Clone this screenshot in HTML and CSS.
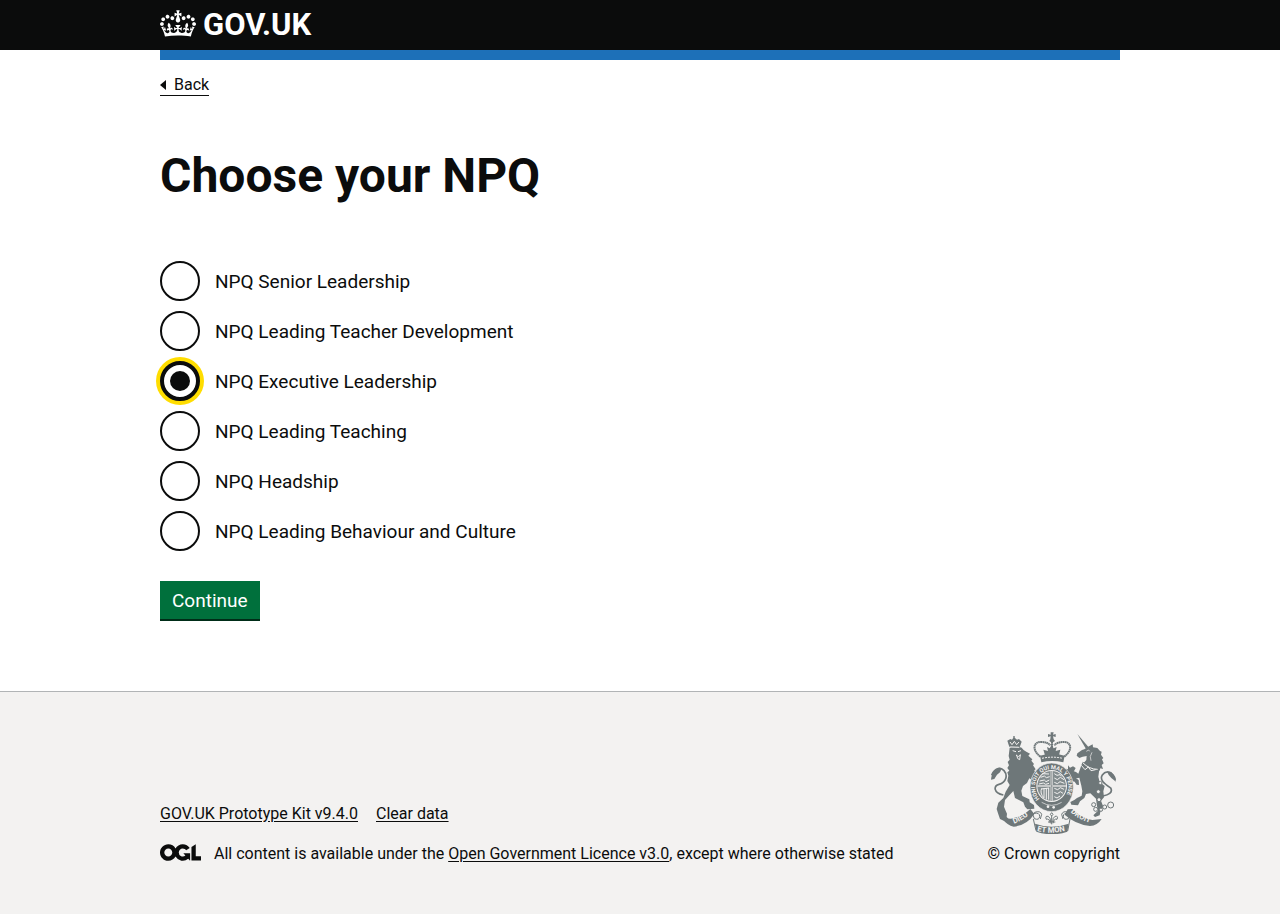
FILE: index.html
```html
<!DOCTYPE html>
<html lang="en">
<head>
<meta charset="utf-8">
<meta name="viewport" content="width=device-width, initial-scale=1">
<title>Choose your NPQ - GOV.UK</title>
<link rel="stylesheet" href="styles.css">
</head>
<body>
<header class="header">
  <div class="container header-inner">
    <a class="logo" href="#">
      <svg class="crown" viewBox="0 0 132 97" width="36" height="27" aria-hidden="true"><path fill="currentColor" fill-rule="evenodd" d="M25 30.2c3.5 1.5 7.7-.2 9.1-3.7 1.5-3.6-.2-7.8-3.9-9.2-3.6-1.4-7.6.3-9.1 3.9-1.4 3.5.3 7.5 3.9 9zM9 39.5c3.6 1.5 7.8-.2 9.2-3.7 1.5-3.6-.2-7.8-3.9-9.1-3.6-1.5-7.6.2-9.1 3.8-1.4 3.5.3 7.5 3.8 9zM4.4 57.2c3.5 1.5 7.7-.2 9.1-3.8 1.5-3.6-.2-7.7-3.9-9.1-3.5-1.5-7.6.3-9.1 3.8-1.4 3.5.3 7.6 3.9 9.1zm38.3-21.4c3.5 1.5 7.7-.2 9.1-3.8 1.5-3.6-.2-7.7-3.9-9.1-3.6-1.5-7.6.3-9.1 3.8-1.3 3.6.4 7.7 3.9 9.1zm64.4-5.6c-3.6 1.5-7.8-.2-9.1-3.7-1.5-3.6.2-7.8 3.8-9.2 3.6-1.4 7.7.3 9.2 3.9 1.3 3.5-.4 7.5-3.9 9zm15.9 9.3c-3.6 1.5-7.7-.2-9.1-3.7-1.5-3.6.2-7.8 3.7-9.1 3.6-1.5 7.7.2 9.2 3.8 1.5 3.5-.3 7.5-3.8 9zm4.7 17.7c-3.6 1.5-7.8-.2-9.2-3.8-1.5-3.6.2-7.7 3.9-9.1 3.6-1.5 7.7.3 9.2 3.8 1.3 3.5-.4 7.6-3.9 9.1zM89.3 35.8c-3.6 1.5-7.8-.2-9.2-3.8-1.4-3.6.2-7.7 3.9-9.1 3.6-1.5 7.7.3 9.2 3.8 1.4 3.6-.3 7.7-3.9 9.1zM69.7 17.7l8.9 4.7V9.3l-8.9 2.8c-.2-.3-.5-.6-.9-.9L72.4 0H59.6l3.5 11.2c-.3.3-.6.5-.9.9l-8.8-2.8v13.1l8.8-4.7c.3.3.6.7.9.9l-5 15.4v.1c-.2.8-.4 1.6-.4 2.4 0 4.1 3.1 7.5 7 8.1h.2c.3 0 .7.1 1 .1.4 0 .7 0 1-.1h.2c4-.6 7.1-4.1 7.1-8.1 0-.8-.1-1.7-.4-2.4V34l-5.1-15.4c.4-.2.7-.6 1-.9zM66 92.8c16.9 0 32.8 1.1 47.1 3.2 4-16.9 8.9-26.7 14-33.5l-9.6-3.4c1 4.9 1.1 7.2 0 10.2-1.5-1.4-3-4.3-4.2-8.7L108.6 76c2.8-2 5-3.2 7.5-3.3-4.4 9.4-10 11.9-13.6 11.2-4.3-.8-6.3-4.6-5.6-7.9 1-4.7 5.7-5.9 8-.5 4.3-8.7-3-11.4-7.6-8.8 7.1-7.2 7.9-13.5 2.1-21.1-8 6.1-8.1 12.3-4.5 20.8-4.7-5.4-12.1-2.5-9.5 6.2 3.4-5.2 7.9-2 7.2 3.1-.6 4.3-6.4 7.8-13.5 7.2-10.3-.9-10.9-8-11.2-13.8 2.5-.5 7.1 1.8 11 7.3L80.2 60c-4.1 4.4-8 5.3-12.3 5.4 1.4-4.4 8-11.6 8-11.6H55.5s6.4 7.2 7.9 11.6c-4.2-.1-8-1-12.3-5.4l1.4 16.4c3.9-5.5 8.5-7.7 10.9-7.3-.3 5.8-.9 12.8-11.1 13.8-7.2.6-12.9-2.9-13.5-7.2-.7-5 3.8-8.3 7.1-3.1 2.7-8.7-4.6-11.6-9.4-6.2 3.7-8.5 3.6-14.7-4.6-20.8-5.8 7.6-5 13.9 2.2 21.1-4.7-2.6-11.9.1-7.7 8.8 2.3-5.5 7.1-4.2 8.1.5.7 3.3-1.3 7.1-5.7 7.9-3.5.7-9-1.8-13.5-11.2 2.5.1 4.7 1.3 7.5 3.3l-4.7-15.4c-1.2 4.4-2.7 7.2-4.3 8.7-1.1-3-.9-5.3 0-10.2l-9.5 3.4c5 6.9 9.9 16.7 14 33.5 14.8-2.1 30.8-3.2 47.7-3.2z"/></svg>
      <span>GOV.UK</span>
    </a>
  </div>
</header>

<div class="page">
  <div class="container">
    <a class="back-link" href="#"><svg class="back-arrow" viewBox="0 0 6 10" width="6" height="10" aria-hidden="true"><path fill="currentColor" d="M0 5 6 0v10z"/></svg>Back</a>
    <main class="main">
      <h1 class="heading" id="heading">Choose your NPQ</h1>
      <form class="form">
        <div class="radios" role="radiogroup" aria-labelledby="heading">
          <div class="radio"><input class="radio-input" type="radio" name="npq" id="npq-1"><label class="radio-label" for="npq-1">NPQ Senior Leadership</label></div>
          <div class="radio"><input class="radio-input" type="radio" name="npq" id="npq-2"><label class="radio-label" for="npq-2">NPQ Leading Teacher Development</label></div>
          <div class="radio"><input class="radio-input" type="radio" name="npq" id="npq-3" checked><label class="radio-label" for="npq-3">NPQ Executive Leadership</label></div>
          <div class="radio"><input class="radio-input" type="radio" name="npq" id="npq-4"><label class="radio-label" for="npq-4">NPQ Leading Teaching</label></div>
          <div class="radio"><input class="radio-input" type="radio" name="npq" id="npq-5"><label class="radio-label" for="npq-5">NPQ Headship</label></div>
          <div class="radio"><input class="radio-input" type="radio" name="npq" id="npq-6"><label class="radio-label" for="npq-6">NPQ Leading Behaviour and Culture</label></div>
        </div>
        <button class="button" type="button">Continue</button>
      </form>
    </main>
  </div>
</div>

<footer class="footer">
  <div class="container footer-inner">
    <div class="footer-meta">
      <ul class="footer-links">
        <li><a class="footer-link" href="#">GOV.UK Prototype Kit v9.4.0</a></li>
        <li><a class="footer-link" href="#">Clear data</a></li>
      </ul>
      <div class="licence">
        <svg class="ogl" viewBox="0 0 483.2 195.7" width="41" height="17" aria-hidden="true"><path fill="currentColor" d="M421.5 142.8V.1l-50.7 32.3v161.1h112.4v-50.7zm-122.3-9.6A47.12 47.12 0 0 1 221 97.8c0-26 21.1-47.1 47.1-47.1 16.7 0 31.4 8.7 39.7 21.8l42.7-27.2A97.63 97.63 0 0 0 268.1 0c-36.5 0-68.3 20.1-85.1 49.7A98 98 0 0 0 97.8 0C43.9 0 0 43.9 0 97.8s43.9 97.8 97.8 97.8c36.5 0 68.3-20.1 85.1-49.7a97.76 97.76 0 0 0 149.6 25.4l19.4 22.2h3v-87.8h-80l24.3 27.5zM97.8 145c-26 0-47.1-21.1-47.1-47.1s21.1-47.1 47.1-47.1 47.1 21.1 47.1 47.1S123.8 145 97.8 145"/></svg>
        <span>All content is available under the <a class="footer-link" href="#">Open Government Licence v3.0</a>, except where otherwise stated</span>
      </div>
    </div>
    <a class="copyright" href="#">
      <svg class="crest" viewBox="36 30 375 306" width="125" height="102" aria-hidden="true">
        <defs>
          <path id="motto" d="M182 231A50 53 0 1 1 254 231"/>
          <path id="dieu" d="M105 305Q132 296 160 270"/>
          <path id="mon" d="M174 327Q218 338 266 325"/>
          <path id="droit" d="M275 270Q302 297 346 305"/>
        </defs>
        <!-- royal crown -->
        <g fill="#6e7779">
          <path d="M215 31h9l-2 7 8-2v9l-8-2 2 9 4 5-9 5-8-5 3-5 1-9-8 2v-9l8 2z"/>
          <path d="M183 101q37-11 74 0l-4 20q-34-8-66 0z"/>
          <path d="M218 69l6 10 9-4-3 12 14-4-4 17q-22-5-42 0l-5-17 14 4-3-12 8 4z"/>
        </g>
        <path d="M184 104C156 82 165 58 187 60q19 0 27 10M256 104c28-22 19-46-3-44q-19 0-27 10M219 60v24" fill="none" stroke="#6e7779" stroke-width="6" stroke-dasharray="5 1"/>
        <path d="M189 109q31-7 62 0" fill="none" stroke="#f3f2f1" stroke-width="3" stroke-dasharray="6 3"/>
        <!-- lion -->
        <g fill="#6e7779">
          <path d="M91 75l-6-19 9-5 5 2 4-6-1-4h6l-1 4 7 6 6-2 8 8-6 17q-15-5-31-1z"/>
          <path d="M92 77q16-8 36 0 6 9 14 12l11 6-5 6 12 11-3 4 8 10-3 4 8 12-4 3 5 14 6 6 3 16-7 3 1 15-10-5-4-9 4-7-13-9-7 14-12 9-5 14 3 16 21 10 1 9 13 8 1 11-21 2-7-8-5-13-25-13-5-21-12 13-13 14-3 20 5 12 4 9-1 10 6 6-3 10-9-3-14-7-5-14-5-16 5-19 15-14 7-19 12-20-7-12 3-16-3-10 6-5-6-8 5-8-4-10 6-7-3-11z"/>
        </g>
        <path d="M101 86l10 3M117 89l9-3M112 99q7 9 12-1l-2 15q-8-2-8-10z" fill="none" stroke="#f3f2f1" stroke-width="3"/>
        <path d="M93 60l6 8 7-10 7 10 7-8M92 75l29 1" fill="none" stroke="#f3f2f1" stroke-width="3"/>
        <path d="M73 219C43 213 43 192 60 187c22-6 27-27 15-41-11-13-29-7-37 14" fill="none" stroke="#6e7779" stroke-width="5"/>
        <path d="M37 166q3-21 22-29l10 1-6 13-9 7-8 13-10 2z" fill="#6e7779"/>
        <!-- unicorn -->
        <g fill="#6e7779">
          <path d="M295 36l34 40-8 5z"/>
          <path d="M316 82l14-9 11-6 1 9 13 2 8 9 5 2-2 9 7 10-4 4 5 12-6 5 4 12-8-2-2 7-50-21 10-11 1-12-12 2-10 4-8-7 2-7 14-10z"/>
          <path d="M311 119l50 23-3 22 4 16 15 12-4 16 2 18-9 10 7 18-8 11-3 15-14 5-5-5 14-14-3-13-3-23-17-16-13 2-5 12-13 10-6 12-20-2-3-8 12-6 8-6 14-7 2-13-3-17-6-24-17 4-16-7-13-16 6-8 15 5 15 5 7 5z"/>
          <path d="M276 151l10 3 5 15 8 5 1 15-7-1-6-9-9-2 1-8 6-2-6-9-6-1z"/>
          <path d="M267 130l6 7 9-4 8 5-6 11-17 2z"/>
        </g>
        <path d="M311 122q20 20 45 20M307 130l11 13 10-8 8 11 14-3" fill="none" stroke="#f3f2f1" stroke-width="3"/>
        <path d="M322 88l7-4 3 4M339 91q-9 13-3 25" fill="none" stroke="#f3f2f1" stroke-width="2"/>
        <path d="M372 222c15-3 31-10 23-24-17-12-35-24-25-39 12-17 34-8 39 15" fill="none" stroke="#6e7779" stroke-width="5"/>
        <path d="M383 147l14 3 10 14 4 15-14-11-8-9z" fill="#6e7779"/>
        <g fill="#f3f2f1" stroke="#6e7779" stroke-width="3"><circle cx="395" cy="249" r="9"/><circle cx="377" cy="255" r="6"/><circle cx="366" cy="263" r="5"/><circle cx="344" cy="248" r="6"/><circle cx="350" cy="262" r="6"/><circle cx="358" cy="209" r="6"/><circle cx="360" cy="233" r="6"/><circle cx="364" cy="183" r="5"/></g>
        <!-- garter and shield -->
        <ellipse cx="218" cy="196" rx="65" ry="73" fill="#6e7779" stroke="#f3f2f1" stroke-width="2"/>
        <ellipse cx="218" cy="192" rx="46" ry="48" fill="#f3f2f1"/>
        <ellipse cx="218" cy="192" rx="43" ry="45" fill="#848d8f"/>
        <path d="M218 147v90M175 192h86" stroke="#f3f2f1" stroke-width="6"/>
        <g fill="none" stroke="#f3f2f1" stroke-width="3">
          <path d="M185 166l11-4 6 5 10-3M182 177l14-3 5 5 10-5M190 155l20 1M180 186l13-3 7 4 10-3"/>
          <path d="M226 155l8 5 9-2 5 5M226 168l9 5 9-7 11 7M226 181l9 4 8-6 13 5"/>
          <path d="M226 199l10 4 8-6 11 5M226 211l9 4 9-6 8 5M226 224l8 4 9-6"/>
          <path d="M188 199q-6 14 6 28M195 198v31M202 198v35M209 198v35M187 201l23-3"/>
        </g>
        <path d="M218 147v90M175 192h86" stroke="#6e7779" stroke-width="2"/>
        <text class="crest-motto"><textPath href="#motto">HONI SOIT QUI MAL Y PENSE</textPath></text>
        <g fill="#f3f2f1"><circle cx="207" cy="254" r="4"/><circle cx="224" cy="256" r="4"/></g>
        <path d="M188 241q30 18 60 0" fill="none" stroke="#f3f2f1" stroke-width="2"/>
        <!-- ribbon -->
        <g fill="#6e7779">
          <path d="M69 289l27 1q35-6 58-29l12 15q-22 34-62 38-19-3-35-25z"/>
          <path d="M266 262l14-1q27 28 60 33l28-3q-13 20-35 21-44-5-76-34z"/>
          <path d="M168 305q50 18 101 0l-4 24q-46 16-93 0z"/>
        </g>
        <path d="M165 274q17-3 17 9-1 13-16 7-8-12 1-19 17-6 21 6l-4 14M270 274q-17-3-17 9 1 13 16 7 7-12-2-20-15-4-19 7l4 14M163 291l8 35M273 291l-7 36" fill="none" stroke="#6e7779" stroke-width="3"/>
        <text class="crest-word"><textPath href="#dieu">DIEU</textPath></text>
        <text class="crest-word"><textPath href="#mon">ET MON</textPath></text>
        <text class="crest-word"><textPath href="#droit">DROIT</textPath></text>
        <!-- plume -->
        <path d="M218 307v-25q-8-5 0-10 8 5 0 10M214 304q-3-16-12-12-5-11 6-9 7 4 7 17M222 304q3-16 12-12 5-11-6-9-7 4-7 17M207 300h22" fill="none" stroke="#6e7779" stroke-width="3"/>
      </svg>
      <span>© Crown copyright</span>
    </a>
  </div>
</footer>
</body>
</html>
```
FILE: styles.css
```css
* {
  box-sizing: border-box;
}

html {
  background: #f3f2f1;
}

body {
  margin: 0;
  color: #0b0c0c;
  font-family: Roboto, "Liberation Sans", sans-serif;
  font-size: 16px;
  line-height: 20px;
}

.container {
  max-width: 960px;
  margin: 0 auto;
}

@media (max-width: 1020px) {
  .container {
    margin: 0 30px;
  }
}

.header {
  background: #0b0c0c;
}

.header-inner {
  position: relative;
  padding: 10px 0;
}

.header-inner::after {
  content: "";
  position: absolute;
  top: 100%;
  left: 0;
  width: 100%;
  height: 10px;
  background: #1d70b8;
}

.logo {
  display: inline-flex;
  align-items: center;
  gap: 7px;
  color: #ffffff;
  font-size: 31px;
  font-weight: 700;
  line-height: 30px;
  text-decoration: none;
  vertical-align: top;
}

.crown {
  margin-bottom: 3px;
}

.page {
  padding: 25px 0 70px;
  background: #ffffff;
}

.back-link {
  display: inline-flex;
  align-items: center;
  gap: 8px;
  border-bottom: 1px solid #0b0c0c;
  color: #0b0c0c;
  text-decoration: none;
  vertical-align: top;
}

.main {
  padding-top: 55px;
}

.heading {
  margin: 0 0 60px;
  font-size: 48px;
  font-weight: 700;
  line-height: 50px;
}

.radios {
  display: grid;
  gap: 10px;
  margin-bottom: 30px;
}

.radio {
  display: flex;
  align-items: center;
  gap: 15px;
}

.radio-input {
  appearance: none;
  display: grid;
  place-items: center;
  flex: none;
  width: 40px;
  height: 40px;
  margin: 0;
  border: 2px solid #0b0c0c;
  border-radius: 50%;
  background: #ffffff;
}

.radio-input:checked {
  border-width: 4px;
  outline: none;
  box-shadow: 0 0 0 4px #ffdd00;
}

.radio-input:checked::before {
  content: "";
  width: 20px;
  height: 20px;
  border-radius: 50%;
  background: #0b0c0c;
}

.radio-label {
  font-size: 19px;
  line-height: 25px;
}

.button {
  display: block;
  padding: 10px 12px 9px;
  margin: 0 0 2px;
  border: 0;
  background: #00703c;
  box-shadow: 0 2px 0 #002d18;
  color: #ffffff;
  font-family: inherit;
  font-size: 19px;
  line-height: 19px;
}

.footer {
  padding: 40px 0 50px;
  border-top: 1px solid #b1b4b6;
  background: #f3f2f1;
}

.footer-inner {
  display: flex;
  align-items: flex-end;
  justify-content: space-between;
  gap: 30px;
}

.footer-links {
  display: flex;
  flex-wrap: wrap;
  gap: 18px;
  margin: 0 0 20px;
  padding: 0;
  list-style: none;
}

.footer-link {
  color: #0b0c0c;
  text-underline-offset: 2px;
}

.licence {
  display: flex;
  align-items: center;
  gap: 13px;
}

.ogl {
  flex: none;
  margin-bottom: 3px;
}

.copyright {
  display: flex;
  flex-direction: column;
  align-items: center;
  gap: 10px;
  color: #0b0c0c;
  text-decoration: none;
  white-space: nowrap;
}

.crest-motto,
.crest-word {
  fill: #f3f2f1;
  font-weight: 700;
}

.crest-motto {
  font-size: 17px;
}

.crest-word {
  font-size: 23px;
}
```
